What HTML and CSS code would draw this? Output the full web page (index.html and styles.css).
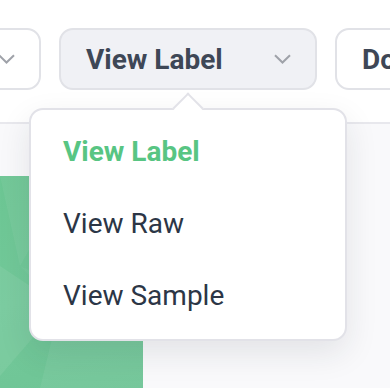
FILE: index.html
```html
<!DOCTYPE html>
<html lang="en">
<head>
    <meta charset="UTF-8">
    <meta name="viewport" content="width=device-width, initial-scale=1.0">
    <title>View menu</title>
    <link rel="stylesheet" href="styles.css">
</head>
<body>
    <div class="toolbar">
        <button class="tool tool-first">
            <span class="tool-label">Sort</span>
            <svg class="chevron" width="17" height="10" viewBox="0 0 17 10"><path d="M1 1.2 L8.5 8.5 L16 1.2"/></svg>
        </button>
        <button class="tool tool-open">
            <span class="tool-label">View Label</span>
            <svg class="chevron" width="17" height="10" viewBox="0 0 17 10"><path d="M1 1.2 L8.5 8.5 L16 1.2"/></svg>
        </button>
        <button class="tool">
            <span class="tool-label">Download</span>
        </button>
    </div>

    <div class="content">
        <div class="thumb">
            <svg class="thumb-art" width="143" height="212" viewBox="0 0 143 212">
                <polygon points="0,0 70,0 20,90" fill="#ffffff" fill-opacity="0.05"/>
                <polygon points="70,0 143,0 143,70 90,120" fill="#000000" fill-opacity="0.03"/>
                <polygon points="0,90 60,130 0,200" fill="#ffffff" fill-opacity="0.07"/>
                <polygon points="20,90 90,120 60,130" fill="#ffffff" fill-opacity="0.04"/>
                <polygon points="60,130 143,150 143,212 40,212" fill="#ffffff" fill-opacity="0.06"/>
                <polygon points="90,120 143,70 143,150" fill="#000000" fill-opacity="0.02"/>
            </svg>
        </div>
    </div>

    <div class="menu">
        <span class="menu-arrow"></span>
        <ul class="menu-list">
            <li class="menu-item active">View Label</li>
            <li class="menu-item">View Raw</li>
            <li class="menu-item">View Sample</li>
        </ul>
    </div>
</body>
</html>
```

FILE: styles.css
```css
* {
    box-sizing: border-box;
}
html, body {
    margin: 0;
    height: 100%;
}
body {
    font-family: Roboto, "Noto Sans", Arial, sans-serif;
    background: #ffffff;
    overflow: hidden;
    display: flex;
    flex-direction: column;
}
.toolbar {
    display: flex;
    gap: 18px;
    padding-top: 28px;
    padding-bottom: 32px;
    margin-left: -73px;
    border-bottom: 2px solid #e8e8ed;
    white-space: nowrap;
}
.tool {
    flex: none;
    display: flex;
    align-items: center;
    justify-content: space-between;
    height: 62px;
    padding: 0 24px 0 25px;
    border: 2px solid #e1e2e7;
    border-radius: 14px;
    background: #ffffff;
    font-family: inherit;
    font-size: 28px;
    font-weight: 700;
    color: #3e4756;
}
.tool-first {
    width: 114px;
}
.tool-first .tool-label {
    visibility: hidden;
    width: 0;
}
.tool-open {
    width: 258px;
    background: #f0f1f5;
}
.chevron {
    fill: none;
    stroke: #9fa2a9;
    stroke-width: 2;
}
.content {
    flex: 1;
    background: #f9f9fb;
    padding-top: 52px;
}
.thumb {
    width: 143px;
    height: 212px;
    background: linear-gradient(160deg, #6cc693 0%, #73c99a 50%, #6ec495 100%);
}
.thumb-art {
    display: block;
}
.menu {
    position: absolute;
    left: 29px;
    top: 108px;
    width: 318px;
    height: 233px;
    background: #ffffff;
    border: 2px solid #e2e2e8;
    border-radius: 14px;
    box-shadow: 0 12px 32px rgba(30, 35, 50, 0.10);
}
.menu-arrow {
    position: absolute;
    left: 146px;
    top: -13px;
    width: 22px;
    height: 22px;
    background: #ffffff;
    border-top: 2px solid #e2e2e8;
    border-left: 2px solid #e2e2e8;
    transform: rotate(45deg);
}
.menu-list {
    list-style: none;
    margin: 0;
    padding: 6px 0 0 32px;
}
.menu-item {
    font-size: 28px;
    line-height: 72px;
    color: #2c3646;
}
.menu-item.active {
    font-weight: 700;
    color: #58c583;
}
```
